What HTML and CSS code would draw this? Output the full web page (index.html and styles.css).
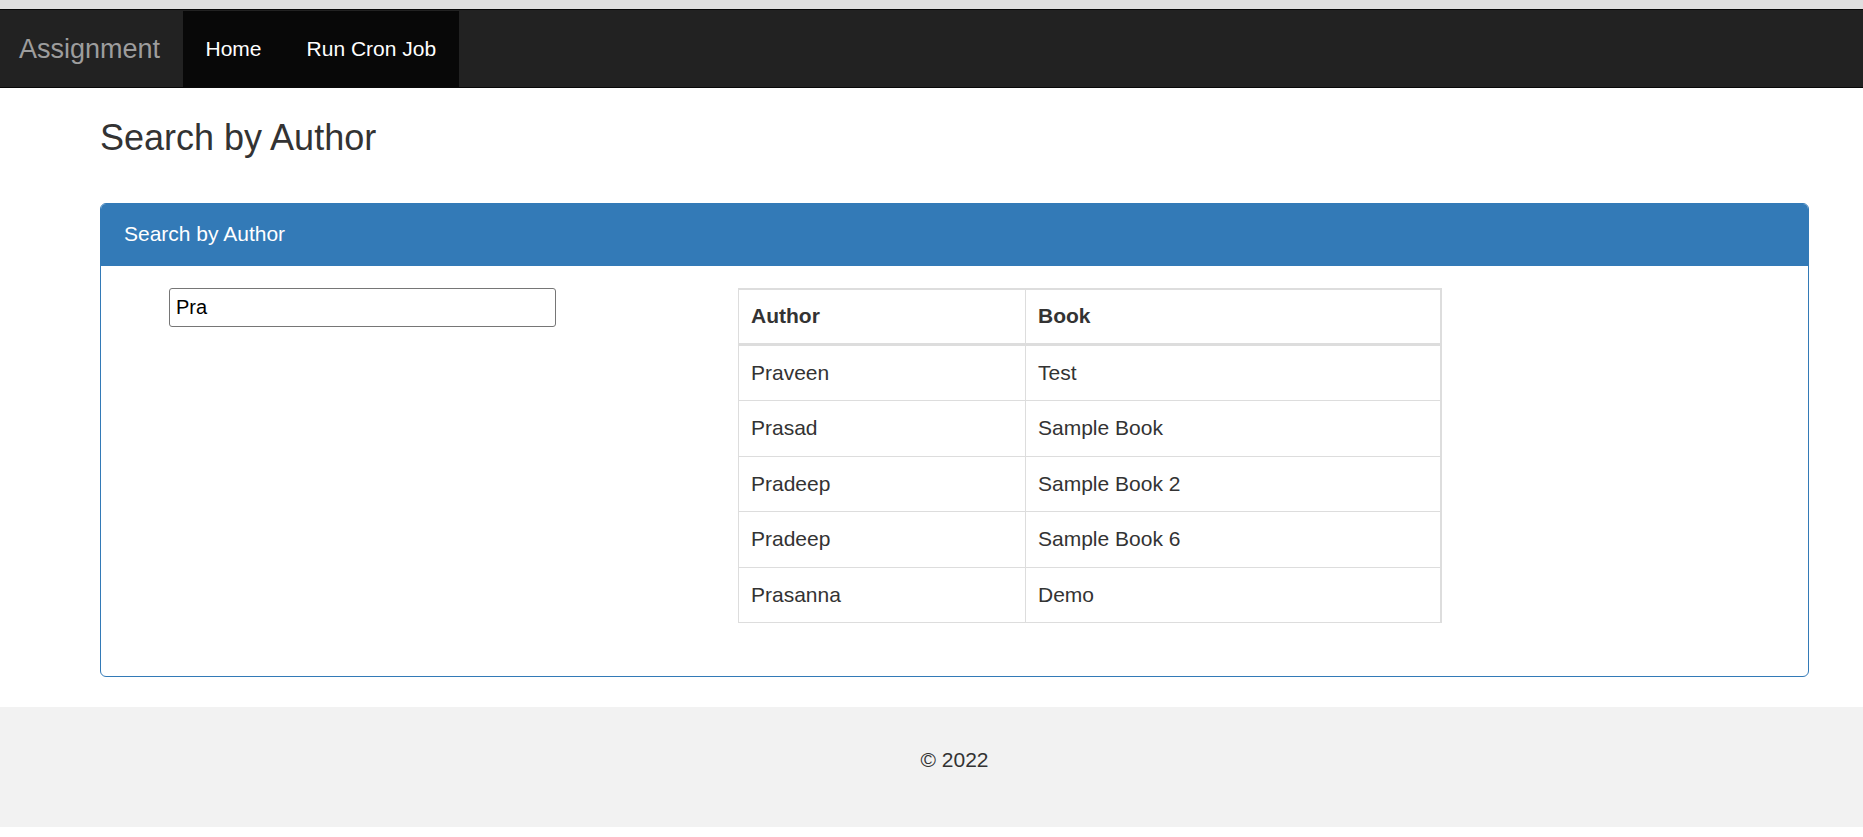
FILE: index.html
```html
<!DOCTYPE html>
<html lang="en">
<head>
<meta charset="utf-8">
<title>Search by Author</title>
<link rel="stylesheet" href="styles.css">
</head>
<body>
<div class="topstrip"></div>
<nav class="navbar">
  <a class="brand" href="#">Assignment</a>
  <ul class="nav-links">
    <li><a href="#">Home</a></li>
    <li><a href="#">Run Cron Job</a></li>
  </ul>
</nav>
<main class="container">
  <h3 class="page-title">Search by Author</h3>
  <section class="panel">
    <div class="panel-heading">Search by Author</div>
    <div class="panel-body">
      <div class="search-col">
        <input class="search-input" type="text" value="Pra">
      </div>
      <div class="table-col">
        <table class="results">
          <thead>
            <tr><th class="col-author">Author</th><th>Book</th></tr>
          </thead>
          <tbody>
            <tr><td>Praveen</td><td>Test</td></tr>
            <tr><td>Prasad</td><td>Sample Book</td></tr>
            <tr><td>Pradeep</td><td>Sample Book 2</td></tr>
            <tr><td>Pradeep</td><td>Sample Book 6</td></tr>
            <tr><td>Prasanna</td><td>Demo</td></tr>
          </tbody>
        </table>
      </div>
    </div>
  </section>
</main>
<footer class="footer">
  <div class="footer-inner">
    <p class="copyright">&copy; 2022</p>
  </div>
</footer>
</body>
</html>
```

FILE: styles.css
```css
* {
  box-sizing: border-box;
}

html, body {
  margin: 0;
  padding: 0;
  background: #fff;
}

body {
  font-family: "Liberation Sans", Arial, Helvetica, sans-serif;
  font-size: 21px;
  line-height: 30px;
  color: #333;
}

.topstrip {
  height: 9px;
  background: #dfdfdf;
}

.navbar {
  display: flex;
  align-items: stretch;
  height: 79px;
  background: #222;
  border-top: 1px solid #080808;
  border-bottom: 1px solid #080808;
}

.brand {
  display: flex;
  align-items: center;
  width: 183px;
  padding-left: 19px;
  font-size: 27px;
  color: #9d9d9d;
  text-decoration: none;
}

.nav-links {
  display: flex;
  list-style: none;
  margin: 0;
  padding: 0;
  background: #080808;
  margin-top: 1px;
}

.nav-links a {
  display: flex;
  align-items: center;
  height: 100%;
  padding: 0 22.5px;
  font-size: 21px;
  color: #fff;
  text-decoration: none;
}

.container {
  margin-left: 100px;
  width: 1709px;
}

.page-title {
  margin: 30px 0 45px 0;
  font-size: 36px;
  font-weight: 400;
  line-height: 39.6px;
  color: #333;
}

.panel {
  border: 1px solid #337ab7;
  border-radius: 6px;
  margin-bottom: 30px;
  background: #fff;
}

.panel-heading {
  background: #337ab7;
  color: #fff;
  font-size: 21px;
  line-height: 30px;
  padding: 15px 22px 16px 23px;
  border-bottom: 1px solid #337ab7;
  border-radius: 5px 5px 0 0;
}

.panel-body {
  display: flex;
  align-items: flex-start;
  padding: 22px 22px 23px 22px;
}

.search-col {
  padding-left: 46px;
}

.search-input {
  display: block;
  width: 387px;
  height: 39px;
  padding: 0 6px;
  border: 1px solid #767676;
  border-radius: 3px;
  font-family: "Liberation Sans", Arial, sans-serif;
  font-size: 20px;
  color: #000;
  background: #fff;
}

.table-col {
  margin-left: 182px;
}

.results {
  width: 704px;
  border-collapse: collapse;
  margin-bottom: 30px;
  font-size: 21px;
  line-height: 30px;
  color: #333;
}

.results th,
.results td {
  border: 1px solid #ddd;
  text-align: left;
  vertical-align: top;
  padding: 12px 12px 12.5px 12px;
}

.results thead th {
  font-weight: 700;
  border-top-width: 2px;
  border-bottom: 3px solid #ddd;
  padding-top: 11px;
  padding-bottom: 12px;
}

.results th:last-child,
.results td:last-child {
  border-right-width: 2px;
}

.col-author {
  width: 287px;
}

.footer {
  background: #f2f2f2;
  height: 120px;
}

.footer-inner {
  margin-left: 100px;
  width: 1709px;
  padding-top: 37.5px;
  text-align: center;
}

.copyright {
  margin: 0;
  font-size: 21px;
  line-height: 30px;
  color: #333;
}
```
